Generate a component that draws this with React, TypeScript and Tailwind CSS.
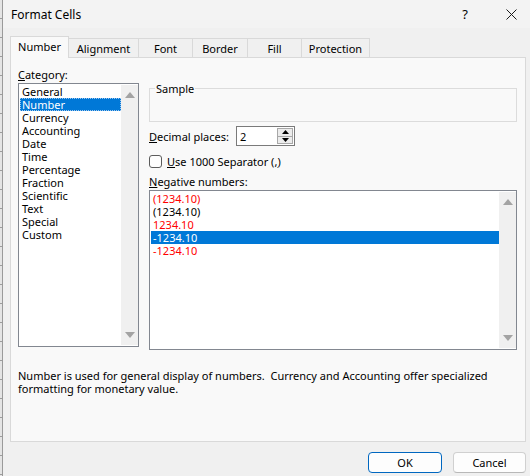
import React from 'react'

const categories = [
  'General',
  'Number',
  'Currency',
  'Accounting',
  'Date',
  'Time',
  'Percentage',
  'Fraction',
  'Scientific',
  'Text',
  'Special',
  'Custom',
]

const negatives = [
  { label: '(1234.10)', red: true },
  { label: '(1234.10)', red: false },
  { label: '1234.10', red: true },
  { label: '-1234.10', red: false, selected: true },
  { label: '-1234.10', red: true },
]

const tabs = [
  { label: 'Alignment', w: 'w-[70px]' },
  { label: 'Font', w: 'w-[54px]' },
  { label: 'Border', w: 'w-[55px]' },
  { label: 'Fill', w: 'w-[54px]' },
  { label: 'Protection', w: 'w-[68px]' },
]

const ScrollArrow: React.FC<{ down?: boolean }> = ({ down }) => (
  <svg width="10" height="6" viewBox="0 0 10 6" className="block">
    {down ? <path d="M0 0 H10 L5 6 Z" fill="#a3a3a3" /> : <path d="M0 6 H10 L5 0 Z" fill="#a3a3a3" />}
  </svg>
)

const ScrollBar: React.FC = () => (
  <div className="w-[17px] h-full bg-[#f0f0f0] flex flex-col items-center justify-between pt-[7px] pb-[7px]">
    <ScrollArrow />
    <ScrollArrow down />
  </div>
)

export default function App() {
  return (
    <div
      className="w-[530px] h-[476px] flex overflow-hidden bg-[#f0f0f0] text-[11px] leading-[13px] text-black"
      style={{ fontFamily: '"Segoe UI", "Noto Sans", sans-serif' }}
    >
      {/* spreadsheet behind the dialog */}
      <div className="w-[3px] h-full border-r border-[#9a9a9a] bg-[repeating-linear-gradient(to_bottom,#e4e4e4_0px,#e4e4e4_18px,#9c9c9c_18px,#9c9c9c_19px)]" />

      <div className="flex-1 flex flex-col">
        {/* title bar */}
        <div className="h-[28px] bg-[#f3f3f3] flex items-center pl-[8px]">
          <span className="text-[12px]">Format Cells</span>
          <span className="ml-auto mr-[38px] text-[13px]">?</span>
          <svg width="11" height="11" viewBox="0 0 11 11" className="mr-[13px]">
            <path d="M0.5 0.5 L10.5 10.5 M10.5 0.5 L0.5 10.5" stroke="#1a1a1a" strokeWidth="1" />
          </svg>
        </div>

        <div className="flex-1 pl-[7px] pt-[8px]">
          {/* tabs */}
          <div className="flex items-end h-[21px]">
            <div className="relative z-10 w-[59px] h-[22px] mb-[-1px] border-l border-t border-r border-[#d9d9d9] bg-[#f9f9f9] flex items-center justify-center pb-[2px]">
              Number
            </div>
            {tabs.map((t) => (
              <div
                key={t.label}
                className={`${t.w} h-[19px] border-t border-r border-[#d9d9d9] bg-[#f0f0f0] flex items-center justify-center`}
              >
                {t.label}
              </div>
            ))}
          </div>

          {/* tab panel */}
          <div className="w-[516px] h-[385px] border border-[#d9d9d9] bg-[#f9f9f9] pt-[10px] px-[7px]">
            <div className="flex gap-[10px]">
              {/* category */}
              <div className="w-[121px] flex flex-col">
                <div className="h-[13px]">
                  <u className="underline-offset-[1px]">C</u>ategory:
                </div>
                <div className="mt-[2px] h-[264px] border border-[#828790] bg-white flex p-[1px] pr-0">
                  <div className="flex-1">
                    {categories.map((c) => (
                      <div
                        key={c}
                        className={`h-[13px] pl-[2px] ${
                          c === 'Number' ? 'bg-[#0078d7] text-white outline-dotted outline-1 outline-[#9fc6ee] -outline-offset-1' : ''
                        }`}
                      >
                        {c}
                      </div>
                    ))}
                  </div>
                  <ScrollBar />
                </div>
              </div>

              {/* right side */}
              <div className="w-[368px] flex flex-col">
                <div className="relative mt-[20px] h-[34px] border border-[#dcdcdc]">
                  <span className="absolute top-[-7px] left-[5px] px-[1px] bg-[#f9f9f9]">Sample</span>
                </div>

                <div className="mt-[4px] h-[20px] flex items-center">
                  <div className="w-[87px]">
                    <u>D</u>ecimal places:
                  </div>
                  <div className="w-[59px] h-[20px] border border-[#7a7a7a] bg-white flex items-center">
                    <span className="flex-1 pl-[3px]">2</span>
                    <div className="w-[17px] h-full flex flex-col py-[1px] pr-[1px]">
                      <div className="flex-1 border border-[#a8a8a8] bg-[#ececec] flex items-center justify-center">
                        <svg width="7" height="4" viewBox="0 0 7 4">
                          <path d="M0 4 H7 L3.5 0 Z" fill="#000" />
                        </svg>
                      </div>
                      <div className="flex-1 border border-t-0 border-[#a8a8a8] bg-[#ececec] flex items-center justify-center">
                        <svg width="7" height="4" viewBox="0 0 7 4">
                          <path d="M0 0 H7 L3.5 4 Z" fill="#000" />
                        </svg>
                      </div>
                    </div>
                  </div>
                </div>

                <div className="mt-[8px] h-[14px] flex items-center">
                  <div className="w-[13px] h-[13px] rounded-[3px] border border-[#5c5c5c] bg-[#fdfdfd]" />
                  <span className="ml-[5px]">
                    <u>U</u>se 1000 Separator (<u>,</u>)
                  </span>
                </div>

                <div className="mt-[7px] h-[13px]">
                  <u>N</u>egative numbers:
                </div>
                <div className="mt-[2px] h-[160px] border border-[#828790] bg-white flex p-[1px] pr-0">
                  <div className="flex-1">
                    {negatives.map((n, i) => (
                      <div
                        key={i}
                        className={`h-[13px] pl-[2px] ${
                          n.selected ? 'bg-[#0078d7] text-white' : n.red ? 'text-[#ff0000]' : 'text-black'
                        }`}
                      >
                        {n.label}
                      </div>
                    ))}
                  </div>
                  <ScrollBar />
                </div>
              </div>
            </div>

            <p className="mt-[19px] w-[480px]">
              Number is used for general display of numbers.&nbsp; Currency and Accounting offer specialized
              <br />
              formatting for monetary value.
            </p>
          </div>

          {/* buttons */}
          <div className="w-[516px] mt-[10px] flex justify-end gap-[11px]">
            <button className="w-[74px] h-[21px] rounded-[4px] border border-[#0067c0] bg-[#fdfdfd] text-[11px] leading-[13px]">
              OK
            </button>
            <button className="w-[73px] h-[21px] rounded-[4px] border border-[#d0d0d0] border-b-[#b8b8b8] bg-[#fdfdfd] text-[11px] leading-[13px]">
              Cancel
            </button>
          </div>
        </div>
      </div>
    </div>
  )
}
